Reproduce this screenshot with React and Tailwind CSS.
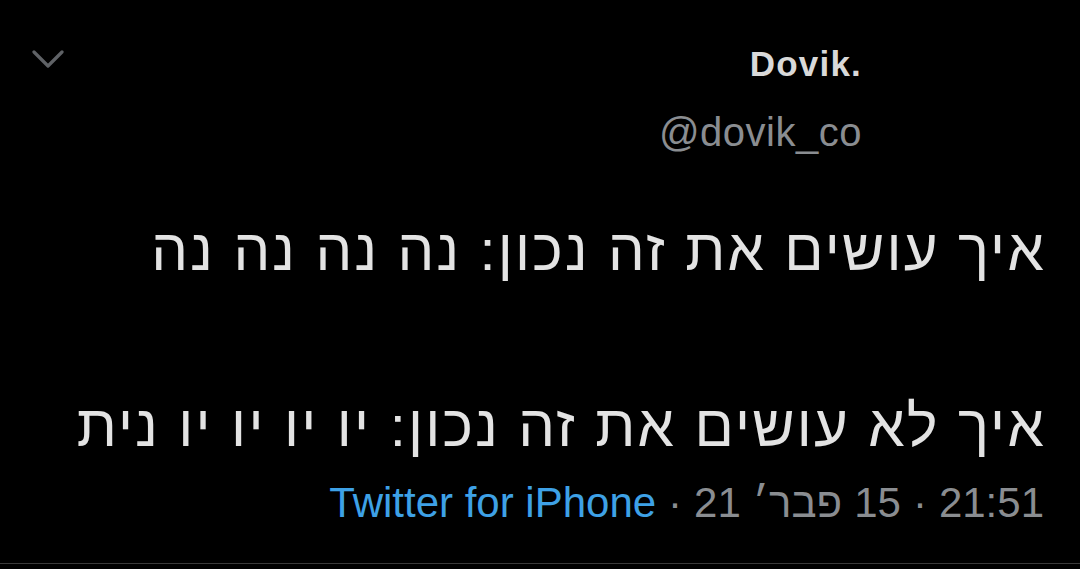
export default function App() {
  return (
    <div className="relative h-[569px] w-full overflow-hidden bg-black font-['Liberation_Sans','DejaVu_Sans',sans-serif]">
      <div className="flex items-start justify-between pl-[32px] pr-[218px] pt-[44px]">
        <svg className="mt-[5px] h-[22px] w-[32px]" viewBox="0 0 32 22" fill="none">
          <polyline points="2,3 16,17 30,3" stroke="#5f6266" strokeWidth="3.2" strokeLinecap="round" strokeLinejoin="round" />
        </svg>
        <div className="flex flex-col items-end">
          <div className="text-[35px] font-bold leading-[40px] tracking-[1.2px] text-[#d9d9d9]">Dovik.</div>
          <div className="mt-[25px] text-[40px] leading-[46px] tracking-[0.5px] text-[#8a8d91]">@dovik_co</div>
        </div>
      </div>

      <div dir="rtl" className="mt-[51px] pr-[34px] text-[58px] leading-[88px] tracking-[2.2px] text-[#e3e3e3]">
        <p>איך עושים את זה נכון: נה נה נה נה</p>
        <p>&nbsp;</p>
        <p>איך לא עושים את זה נכון: יו יו יו יו נית</p>
      </div>

      <div className="mt-[9px] flex items-baseline justify-end gap-[12px] pr-[36px] text-[42px] leading-[48px] text-[#8a8d91]">
        <span className="text-[#3ea1e6]">Twitter for iPhone</span>
        <span>·</span>
        <span>21</span>
        <span dir="rtl">פבר׳</span>
        <span>15</span>
        <span>·</span>
        <span>21:51</span>
      </div>

      <div className="absolute bottom-[5px] left-0 right-0 h-px bg-[#3a3a3a]" />
    </div>
  )
}
